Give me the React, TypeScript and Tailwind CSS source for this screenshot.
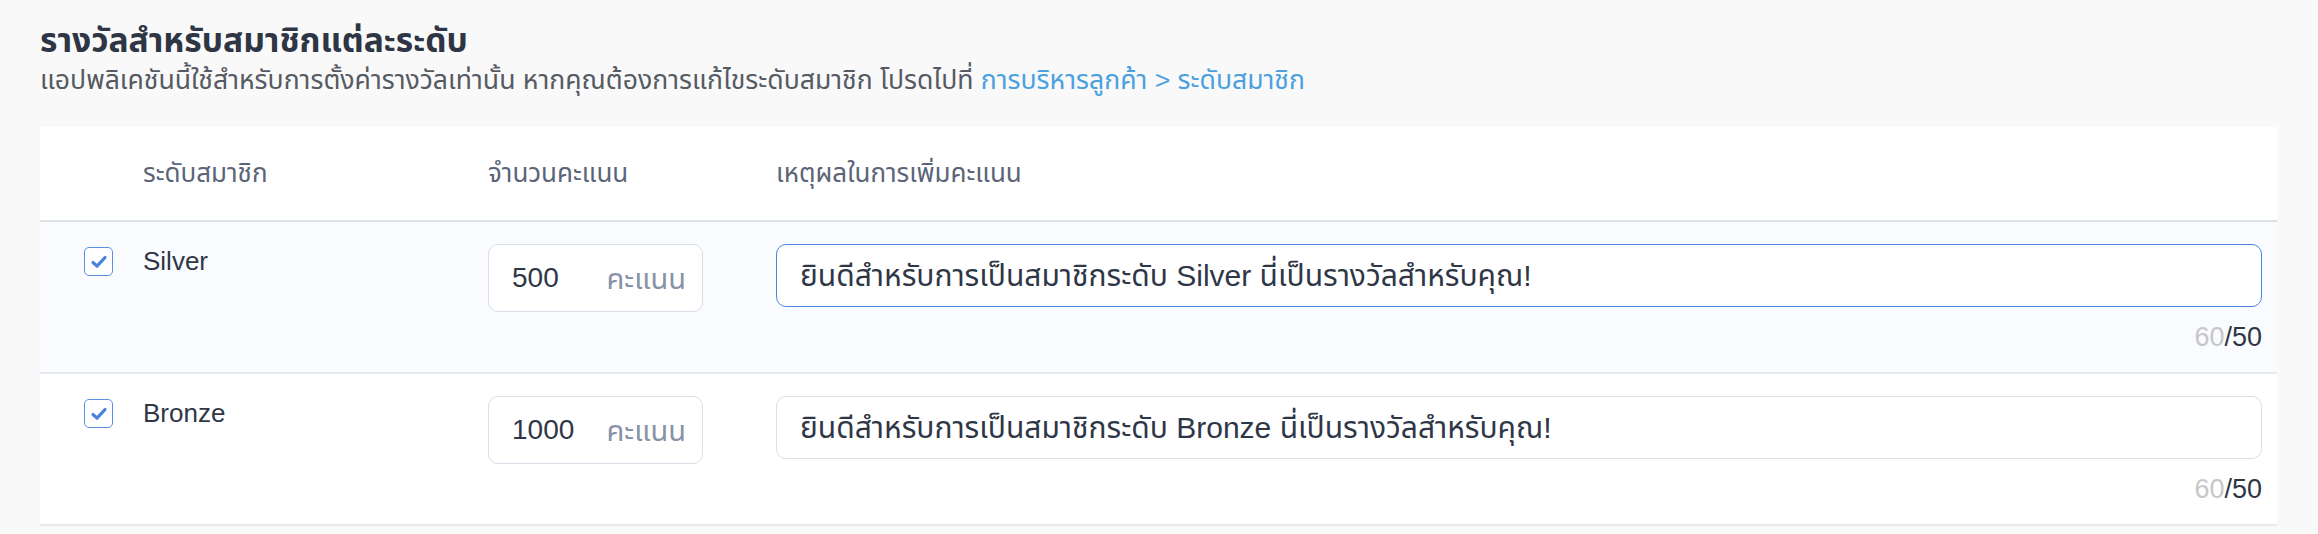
import React from "react";

const FONT = "font-['Liberation_Sans','Noto_Sans_Thai','Noto_Sans',sans-serif]";

function Check() {
  return (
    <div className="w-[29px] h-[29px] rounded-[5px] border-[1.5px] border-[#5b8ee6] bg-white flex items-center justify-center shrink-0">
      <svg width="20" height="20" viewBox="0 0 20 20" fill="none">
        <path d="M4 10.5 L8 14.2 L16 5.5" stroke="#4a82e0" strokeWidth="3.2" strokeLinecap="round" strokeLinejoin="round" />
      </svg>
    </div>
  );
}

type Row = { name: string; points: string; reason: string; active: boolean };

const rows: Row[] = [
  { name: "Silver", points: "500", reason: "ยินดีสำหรับการเป็นสมาชิกระดับ Silver นี่เป็นรางวัลสำหรับคุณ!", active: true },
  { name: "Bronze", points: "1000", reason: "ยินดีสำหรับการเป็นสมาชิกระดับ Bronze นี่เป็นรางวัลสำหรับคุณ!", active: false },
];

export default function App() {
  return (
    <div className={`${FONT} min-h-screen bg-[#f9f9f9] pl-[40px] pr-[41px] pt-[21px]`}>
      <h1 className="text-[33.6px] leading-[39px] font-bold text-[#2e3545]">รางวัลสำหรับสมาชิกแต่ละระดับ</h1>
      <p className="mt-[3px] text-[26.6px] leading-[34px] text-[#555a63]">
        แอปพลิเคชันนี้ใช้สำหรับการตั้งค่ารางวัลเท่านั้น หากคุณต้องการแก้ไขระดับสมาชิก โปรดไปที่{" "}
        <span className="text-[#4ba0e0]">การบริหารลูกค้า &gt; ระดับสมาชิก</span>
      </p>
      <div className="mt-[30px] bg-white">
        <div className="flex items-center h-[95px] pl-[44px] pr-[15px] border-b-2 border-[#dde2e9] text-[26px] text-[#5b6578]">
          <div className="w-[29px] shrink-0" />
          <div className="ml-[30px] w-[345px] shrink-0">ระดับสมาชิก</div>
          <div className="w-[215px] shrink-0">จำนวนคะแนน</div>
          <div className="ml-[73px] flex-1">เหตุผลในการเพิ่มคะแนน</div>
        </div>
        {rows.map((r) => (
          <div
            key={r.name}
            className={`flex items-start pl-[44px] pr-[15px] pt-[22px] pb-[19px] border-b-2 border-[#e6e9ee] ${r.active ? "bg-[#f9fbfe]" : "bg-white"}`}
          >
            <div className="mt-[3px]">
              <Check />
            </div>
            <div className="ml-[30px] w-[345px] shrink-0 text-[26px] leading-[34px] text-[#2f3747]">{r.name}</div>
            <div className="w-[215px] h-[68px] shrink-0 rounded-[10px] border border-[#d8dfe8] bg-white flex items-center justify-between pl-[23px] pr-[16px]">
              <span className="text-[28px] text-[#2f3747]">{r.points}</span>
              <span className="text-[29px] text-[#8792a6] mt-[4px]">คะแนน</span>
            </div>
            <div className="ml-[73px] flex-1 flex flex-col">
              <div
                className={`h-[63px] rounded-[10px] bg-white flex items-center pl-[23px] text-[30px] text-[#2f3747] ${r.active ? "border-[1.5px] border-[#4f85da]" : "border border-[#d8dfe8]"}`}
              >
                {r.reason}
              </div>
              <div className="mt-[14px] h-[32px] leading-[32px] text-right text-[27px]">
                <span className="text-[#c7c7c7]">60</span>
                <span className="text-[#2f3747]">/50</span>
              </div>
            </div>
          </div>
        ))}
      </div>
    </div>
  );
}
